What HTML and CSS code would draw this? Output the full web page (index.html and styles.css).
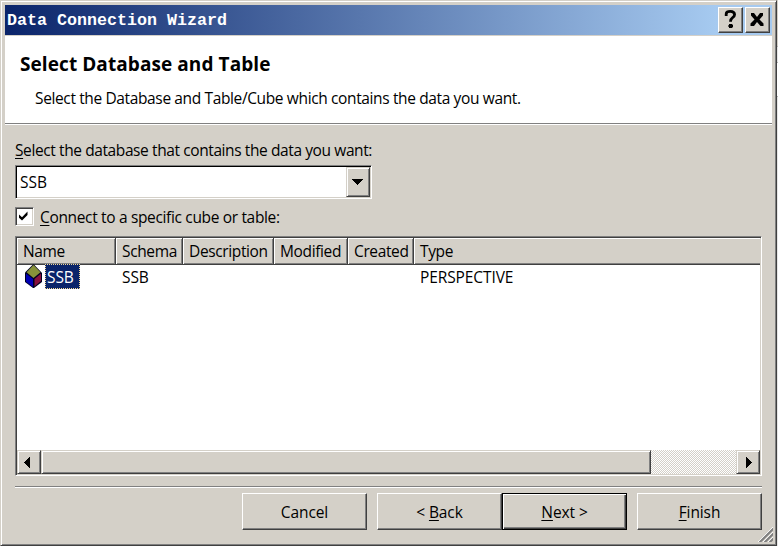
FILE: index.html
```html
<!DOCTYPE html>
<html lang="en">
<head>
<meta charset="utf-8">
<title>Data Connection Wizard</title>
<link rel="stylesheet" href="styles.css">
</head>
<body>
<div class="window">
  <header class="titlebar">
    <span class="caption">Data Connection Wizard</span>
    <button class="tool help"><svg width="13" height="18" viewBox="0 0 13 18"><path d="M2.200 6V4Q2.200 1.400 6.300 1.400T10.600 4.600Q10.600 6.400 8.600 7.600Q6.500 9 6.500 11.800" fill="none" stroke="#000" stroke-width="2.800"/><path d="M5 14h3.400v1h.6v2h-.6v1H5v-1h-.6v-2H5z"/></svg></button>
    <button class="tool"><svg width="14" height="13" viewBox="0 0 14 13"><path d="M1 0h3l3 4 3-4h3v2.500L9.500 6.500 13.500 10.500V13h-3L7 9l-3 4H.5v-2.500l4-4L1 2.500z"/></svg></button>
  </header>
  <section class="banner">
    <h1>Select Database and Table</h1>
    <p>Select the Database and Table/Cube which contains the data you want.</p>
  </section>
  <main class="content">
    <label class="db-label"><u>S</u>elect the database that contains the data you want:</label>
    <div class="combo">
      <span class="combo-value">SSB</span>
      <button class="bevel arrow"><svg width="11" height="6" viewBox="0 0 11 6" shape-rendering="crispEdges"><path d="M0 0h11L5.500 6z"/></svg></button>
    </div>
    <div class="check-row">
      <span class="checkbox"><svg width="9" height="10" viewBox="0 0 9 10"><path d="M0 3.500 3 6.300 8.500 .5V4L3 9.500 0 6.800z"/></svg></span>
      <label class="cube-label"><u>C</u>onnect to a specific cube or table:</label>
    </div>
    <div class="list">
      <div class="row head">
        <span>Name</span><span>Schema</span><span>Description</span><span>Modified</span><span>Created</span><span>Type</span>
      </div>
      <div class="row item">
        <span class="name"><svg width="17" height="24" viewBox="0 0 17 24"><path d="M8.500 0 17 9v9l-8 6h-1L0 18V8.500z" fill="#000020"/><path d="M8.500 1 15.500 8.300 8.500 14 1.500 8.300z" fill="#87923a"/><path d="M1 9.500 8 15v8L1 17.700z" fill="#0000b4"/><path d="M9.500 15 16 9.500V17l-6.500 5.500z" fill="#870f3c"/></svg><b>SSB</b></span>
        <span>SSB</span><span></span><span></span><span></span><span>PERSPECTIVE</span>
      </div>
      <div class="scroll">
        <button class="bevel arrow left"><svg width="6" height="11" viewBox="0 0 6 11" shape-rendering="crispEdges"><path d="M6 0v11L0 5.500z"/></svg></button>
        <div class="bevel thumb"></div>
        <div class="track"></div>
        <button class="bevel arrow right"><svg width="6" height="11" viewBox="0 0 6 11" shape-rendering="crispEdges"><path d="M0 0v11l6-5.500z"/></svg></button>
      </div>
    </div>
    <div class="rule"></div>
    <footer class="actions">
      <button class="btn">Cancel</button>
      <button class="btn back"><span>&lt; <u>B</u>ack</span></button>
      <button class="btn default"><span><u>N</u>ext &gt;</span></button>
      <button class="btn finish"><span><u>F</u>inish</span></button>
    </footer>
  </main>
  <svg class="grip" width="15" height="15" viewBox="0 0 15 15"><path d="M0 15 15 0M5 15 15 5M10 15 15 10" stroke="#fff"/><path d="M1.500 15.500 15.500 1.500M6.500 15.500 15.500 6.500M11.500 15.500 15.500 11.500" stroke="#808080" stroke-width="2"/></svg>
</div>
</body>
</html>
```

FILE: styles.css
```css
* { box-sizing: border-box; }
body {
  margin: 0;
  width: 778px;
  height: 546px;
  overflow: hidden;
  background: linear-gradient(#d4d0c8 46px, #b0b0b0 46px 47px, #e6e6e6 47px 62px, #b0b0b0 62px 63px, #fff 63px 96px, #b0b0b0 96px 97px, #e6e6e6 97px);
  font: 15.5px/24px "Open Sans", "Noto Sans", sans-serif;
  letter-spacing: -0.37px;
  color: #000;
}
button { font: inherit; letter-spacing: -0.1px; color: inherit; padding: 0; margin: 0; background: #d4d0c8; border: 0; border-radius: 0; }
svg { display: block; flex: none; }
u { text-underline-offset: 2px; text-decoration-thickness: 1px; text-decoration-skip-ink: none; }
span, label { white-space: nowrap; }

.window {
  position: relative;
  width: 777px;
  height: 546px;
  padding: 4px 4px 0 4px;
  background: #d4d0c8;
  border: 1px solid;
  border-color: #d4d0c8 #404040 #404040 #d4d0c8;
  box-shadow: inset 1px 1px #fff, inset -1px -1px #808080;
}
.titlebar {
  display: flex;
  align-items: center;
  height: 30px;
  padding: 0 2px;
  gap: 2px;
  background: linear-gradient(90deg, #0a246a, #a6caf0 712px);
}
.caption {
  flex: 1;
  padding-top: 2px;
  color: #fff;
  font: bold 16.660px/30px "Liberation Mono", monospace;
  letter-spacing: 0;
}
.tool, .bevel, .btn {
  display: flex;
  align-items: center;
  justify-content: center;
  background: #d4d0c8;
  border: 1px solid;
  border-color: #fff #404040 #404040 #fff;
  box-shadow: inset -1px -1px #808080;
}
.tool { width: 25px; height: 26px; padding: 0 1px 1px 0; }
.help { padding-bottom: 2px; }
.banner {
  height: 89px;
  margin-top: 1px;
  padding: 15px 15px 0;
  background: #fff;
  border-bottom: 1px solid #fff;
  box-shadow: inset 0 -1px #808080;
}
h1 { margin: 0; font-size: 19px; line-height: 26px; letter-spacing: 0.08px; }
.banner p { margin: 9px 0 0 15px; }
.content { padding: 13px 10px 0; }
.db-label { display: block; height: 27px; letter-spacing: -0.4px; }
.combo {
  display: flex;
  width: 357px;
  height: 34px;
  border: 1px solid;
  border-color: #808080 #fff #fff #808080;
  padding: 1px;
  background: #fff;
  box-shadow: inset 1px 1px #000, inset -1px -1px #d4d0c8;
}
.combo-value { flex: 1; padding-left: 3px; line-height: 31px; letter-spacing: 0; }
.bevel { border-color: #d4d0c8 #404040 #404040 #d4d0c8; box-shadow: inset 1px 1px #fff, inset -1px -1px #808080; }
.arrow { width: 24px; padding-right: 1px; }
.left { padding-right: 4px; }
.right { padding: 0 0 0 2px; }
.check-row { display: flex; gap: 6px; height: 37px; padding-top: 8px; }
.checkbox {
  width: 19px;
  height: 19px;
  padding: 3px 0 0 3px;
  background: #fff;
  border: 1px solid;
  border-color: #808080 #fff #fff #808080;
  box-shadow: inset 1px 1px #404040, inset -1px -1px #d4d0c8;
}
.cube-label { margin-top: -2px; letter-spacing: -0.34px; }
.list {
  display: flex;
  flex-direction: column;
  height: 240px;
  padding: 1px;
  background: #fff;
  border: 1px solid;
  border-color: #808080 #fff #fff #808080;
  box-shadow: inset 1px 1px #404040, inset -1px -1px #d4d0c8;
}
.row { display: grid; grid-template-columns: 99px 67px 91px 74px 66px 346px; }
.row > span { padding-left: 6px; }
.head { height: 26px; }
.head > span {
  line-height: 26px;
  background: #d4d0c8;
  border-right: 1px solid #404040;
  border-bottom: 1px solid #404040;
  box-shadow: inset 1px 1px #fff, inset -1px -1px #808080;
}
.head > span:last-child { border-right: 0; box-shadow: inset 1px 1px #fff, inset 0 -1px #808080; }
.item { flex: 1; line-height: 27px; letter-spacing: -0.1px; }
.row > .name { display: flex; gap: 3px; padding-left: 8px; }
.name b {
  width: 35px;
  height: 25px;
  padding-left: 1px;
  font-weight: normal;
  line-height: 25px;
  color: #fff;
  background: #0a246a;
  border: 1px dotted #f5db95;
}
.scroll { display: flex; height: 24px; }
.thumb { width: 610px; }
.track { flex: 1; background: repeating-conic-gradient(#fff 0 25%, #d4d0c8 0 50%) 0 0 / 2px 2px; }
.rule { height: 2px; margin-top: 10px; background: #fff; border-top: 1px solid #808080; }
.actions { display: flex; justify-content: flex-end; margin-top: 5px; }
.btn { width: 125px; height: 37px; }
.back, .finish { margin-left: 10px; }
.default { border-color: #000; box-shadow: inset 1px 1px #fff, inset -1px -1px #404040, inset -2px -2px #808080; }
.grip { position: absolute; right: 3px; bottom: 3px; }
```
